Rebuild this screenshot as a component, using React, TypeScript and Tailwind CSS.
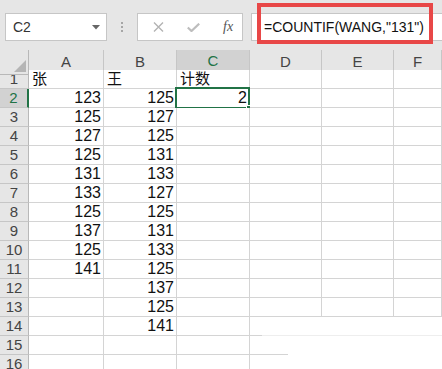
import React from "react";

const COLS = ["A", "B", "C", "D", "E", "F"];
const A_VALS = [123, 125, 127, 125, 131, 133, 125, 137, 125, 141];
const B_VALS = [125, 127, 125, 131, 133, 127, 125, 131, 133, 125, 137, 125, 141];

const cellFont = {
  fontFamily: "'Liberation Sans Narrow', 'Liberation Sans', 'Noto Sans CJK SC', sans-serif",
};

function cellValue(row: number, col: string): { text: string; num: boolean } | null {
  if (row === 1) {
    if (col === "A") return { text: "张", num: false };
    if (col === "B") return { text: "王", num: false };
    if (col === "C") return { text: "计数", num: false };
    return null;
  }
  if (col === "A" && A_VALS[row - 2] !== undefined) return { text: String(A_VALS[row - 2]), num: true };
  if (col === "B" && B_VALS[row - 2] !== undefined) return { text: String(B_VALS[row - 2]), num: true };
  if (col === "C" && row === 2) return { text: "2", num: true };
  return null;
}

function Toolbar() {
  return (
    <div className="h-[50px] bg-[#e6e6e6] flex items-start pt-[13px] pl-[5px] relative">
      {/* name box */}
      <div className="w-[102px] h-[28px] bg-white border border-[#c6c6c6] flex items-center justify-between pl-[7px] pr-[6px]">
        <span className="text-[14px] text-[#333]" style={{ fontFamily: "'Liberation Sans', sans-serif" }}>
          C2
        </span>
        <svg width="8" height="5" viewBox="0 0 8 5">
          <path d="M0 0 L8 0 L4 4.5 Z" fill="#666" />
        </svg>
      </div>
      {/* grip dots */}
      <div className="w-[30px] h-[28px] flex flex-col items-center justify-center gap-[2px]">
        <div className="w-[2px] h-[2px] bg-[#a6a6a6]" />
        <div className="w-[2px] h-[2px] bg-[#a6a6a6]" />
        <div className="w-[2px] h-[2px] bg-[#a6a6a6]" />
      </div>
      {/* cancel / enter / fx */}
      <div className="w-[106px] h-[28px] bg-white border border-[#c6c6c6] flex items-center">
        <div className="w-[15px]" />
        <svg width="11" height="10" viewBox="0 0 11 10">
          <path d="M1 0.5 L10 9.5 M10 0.5 L1 9.5" stroke="#b3b3b3" strokeWidth="1.4" />
        </svg>
        <div className="w-[23px]" />
        <svg width="13" height="9" viewBox="0 0 13 9">
          <path d="M0.8 4.5 L4.5 8 L12.2 0.7" stroke="#bdbdbd" strokeWidth="2.2" fill="none" />
        </svg>
        <div className="w-[23px]" />
        <span
          className="text-[14px] italic text-[#555] leading-none"
          style={{ fontFamily: "'Liberation Serif', serif" }}
        >
          fx
        </span>
      </div>
      <div className="w-[8px]" />
      {/* formula input */}
      <div className="flex-1 h-[28px] bg-white border border-[#c6c6c6] border-r-0 flex items-center pl-[12px]">
        <span className="text-[14px] text-[#111]" style={{ fontFamily: "'Liberation Sans', sans-serif" }}>
          =COUNTIF(WANG,"131")
        </span>
      </div>
      {/* red highlight */}
      <div className="absolute left-[257px] top-[3px] w-[176px] h-[41px] border-4 border-[#e84747]" />
    </div>
  );
}

function HeaderRow() {
  return (
    <div className="grid grid-cols-[29px_75px_73px_73px_72px_72px_1fr] h-[20px] bg-[#e6e6e6]">
      <div className="border-r border-b border-[#b8b8b8] relative">
        <svg className="absolute right-[2px] bottom-[2px]" width="12" height="12" viewBox="0 0 12 12">
          <path d="M12 0 L12 12 L0 12 Z" fill="#b5b5b5" />
        </svg>
      </div>
      {COLS.map((c) => (
        <div
          key={c}
          className={
            c === "C"
              ? "bg-[#d2d2d2] border-r border-[#c6c6c6] border-b-2 border-b-[#217346] text-[#217346] flex items-center justify-center"
              : "border-r border-b border-[#c6c6c6] text-[#444] flex items-center justify-center"
          }
          style={{ ...cellFont, fontSize: 15 }}
        >
          {c}
        </div>
      ))}
    </div>
  );
}

function Row({ n }: { n: number }) {
  const sel = n === 2;
  return (
    <div className="grid grid-cols-[29px_75px_73px_73px_72px_72px_1fr] h-[19px]">
      <div
        className={
          sel
            ? "bg-[#d2d2d2] border-b border-[#c6c6c6] border-r-2 border-r-[#217346] text-[#217346] flex items-end justify-center leading-[18px]"
            : "bg-[#e6e6e6] border-b border-[#c6c6c6] border-r border-r-[#b8b8b8] text-[#444] flex items-end justify-center leading-[18px]"
        }
        style={{ ...cellFont, fontSize: 15 }}
      >
        {n}
      </div>
      {COLS.map((c) => {
        const v = cellValue(n, c);
        return (
          <div
            key={c}
            className={
              "relative border-r border-b border-[#d4d4d4] bg-white flex items-end leading-[18px] text-[#111] " +
              (v && v.num ? "justify-end pr-[2px]" : "justify-start pl-[3px]")
            }
            style={{ ...cellFont, fontSize: v && !v.num ? 15 : 16 }}
          >
            {v ? v.text : null}
            {n === 2 && c === "C" && (
              <div className="absolute -left-[2px] -top-[2px] -right-[1px] -bottom-[2px] border-2 border-[#217346] pointer-events-none">
                <div className="absolute -right-[4px] -bottom-[4px] w-[6px] h-[6px] bg-[#217346] border border-white" />
              </div>
            )}
          </div>
        );
      })}
    </div>
  );
}

export default function App() {
  const rows = Array.from({ length: 16 }, (_, i) => i + 1);
  return (
    <div className="w-[442px] h-[369px] overflow-hidden bg-white relative">
      <Toolbar />
      <HeaderRow />
      {rows.map((n) => (
        <Row key={n} n={n} />
      ))}
      {/* washed-out patch at the bottom right */}
      <div className="absolute left-[262px] top-[317px] right-0 h-[18px] bg-white" />
      <div className="absolute left-[262px] top-[335px] right-0 h-[1px] bg-white/60" />
      <div className="absolute left-[288px] top-[336px] right-0 bottom-0 bg-white" />
    </div>
  );
}
